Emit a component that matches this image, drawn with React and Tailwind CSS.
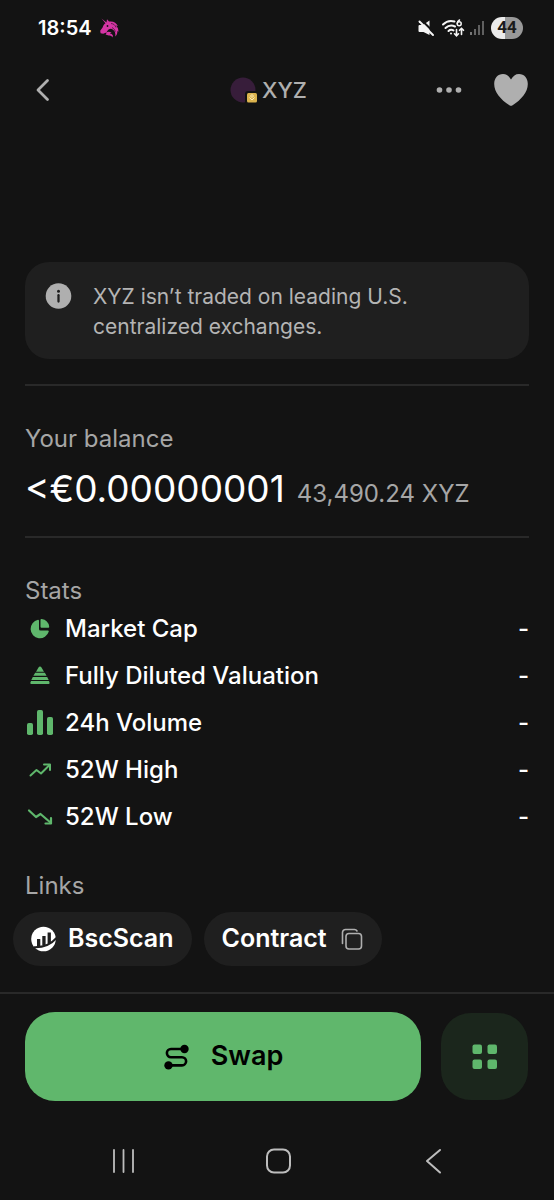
import React from "react";

const stats = [
  { label: "Market Cap", icon: PieIcon },
  { label: "Fully Diluted Valuation", icon: PyramidIcon },
  { label: "24h Volume", icon: BarsIcon },
  { label: "52W High", icon: TrendUpIcon },
  { label: "52W Low", icon: TrendDownIcon },
];

function PieIcon() {
  return (
    <svg width="28" height="28" viewBox="0 0 28 28" fill="#5fb76c" aria-hidden="true">
      <path d="M13 4.800a1 1 0 0 1 1 1V14a1.500 1.500 0 0 0 1.500 1.500h7.300a1 1 0 0 1 1 1.100A9.300 9.300 0 1 1 13 4.800z" />
      <path d="M15.500 5a1 1 0 0 1 1.200-1A9 9 0 0 1 24.200 11.500a1 1 0 0 1-1 1.200H16.500a1 1 0 0 1-1-1z" />
    </svg>
  );
}

function PyramidIcon() {
  return (
    <svg width="28" height="28" viewBox="0 0 28 28" fill="#5fb76c" aria-hidden="true">
      <path d="M13.500 5.500c.7-1.200 2.300-1.200 3 0L19 9.700h-8z" />
      <path d="M10.200 10.800h9.600l1.800 3H8.400z" />
      <path d="M7.800 14.900h14.400l1.500 3H6.300z" />
      <path d="M6 19h18l.5 1.500c.3.900-.2 1.500-1 1.500H6.500c-.9 0-1.400-.6-1.100-1.500z" />
    </svg>
  );
}

function BarsIcon() {
  return (
    <svg width="28" height="28" viewBox="0 0 28 28" fill="#5fb76c" aria-hidden="true">
      <rect x="2" y="14" width="6" height="12" rx="1.800" />
      <rect x="12" y="1" width="6" height="25" rx="1.800" />
      <rect x="22" y="8" width="6" height="18" rx="1.800" />
    </svg>
  );
}

function TrendUpIcon() {
  return (
    <svg width="28" height="28" viewBox="0 0 28 28" fill="none" stroke="#5fb76c" strokeWidth="2" strokeLinecap="round" strokeLinejoin="round" aria-hidden="true">
      <path d="M5.500 19.500l6-5.500 4.500 3.500L24.500 9" />
      <path d="M19 8.500h6V14" />
    </svg>
  );
}

function TrendDownIcon() {
  return (
    <svg width="28" height="28" viewBox="0 0 28 28" fill="none" stroke="#5fb76c" strokeWidth="2.200" strokeLinecap="round" strokeLinejoin="round" aria-hidden="true">
      <path d="M4 7.500l7 6.500 4.500-3L26 20" />
      <path d="M20.500 20.500H26V15" />
    </svg>
  );
}

function UnicornIcon() {
  return (
    <svg width="20" height="20" viewBox="0 0 20 20" fill="#d535a4" aria-hidden="true">
      <path d="M1.500.5L6.500 4.500 7 1.200 9 3.600c4-.8 7.600 1.200 8.800 4.400L16 7.500c1.800 1.800 2.700 4 2.300 6.500l-1-1.300c.3 2.200-.4 4.300-2 5.800.4-3.400-.3-5.400-2.600-7-1.900-1.300-2.400-.8-3.700-.2-1 .5-1.500 2-2.700 3.200L3.200 15.800l-2.600-.6-.4-2.400 2.400-3.200C3.200 7.600 4 6.200 5.500 5.200z" />
      <path d="M6 14.500c1.800-.9 3.700-.9 5.600.3-1 .2-1.500.5-1.700 1 1.400-.2 2.300.3 3 1.600l-.4 2c-.7-1.400-1.900-2-3.800-2l-3.200-.8c1-.8 1-1.400.5-2.100z" />
      <circle cx="7.500" cy="8" r=".9" fill="#131313" />
      <path d="M11 5.500c2.500.2 4.300 1.500 5 4M12 9.500c1.800.9 2.900 2.400 3.300 4.200" stroke="#131313" strokeWidth=".6" fill="none" />
    </svg>
  );
}

function StatusIcons() {
  return (
    <div className="flex items-center">
      <svg width="18" height="18" viewBox="0 0 18 18" aria-hidden="true">
        <path d="M2.500 6H6l6.500-4.500V16L6.500 13h-4a1 1 0 0 1-1-1V7a1 1 0 0 1 1-1z" fill="#f5f5f5" />
        <path d="M4.500 1L18 14.500" stroke="#131313" strokeWidth="2" />
        <path d="M2.500 2.500L16 16" stroke="#f5f5f5" strokeWidth="2" strokeLinecap="round" />
      </svg>
      <svg className="ml-1.5" width="24" height="20" viewBox="0 0 24 20" fill="none" stroke="#f5f5f5" strokeLinecap="round" aria-hidden="true">
        <path d="M2 6.500C5.500 3 9.500 2.300 13.500 3.500M4.500 10C7.300 7.400 11 6.900 14 8.500M7.500 13c1.400-1.300 3.300-1.500 5-.6" strokeWidth="2" />
        <circle cx="10" cy="15.500" r="1" fill="#f5f5f5" stroke="none" />
        <path d="M18.500 2c-1.500.9-2.200 2-2.200 3.500" strokeWidth="1.500" />
        <circle cx="18.200" cy="5.800" r="2" strokeWidth="1.500" />
        <path d="M15.500 11.500v6M13.500 15.800l2 2 2-2M20.500 16.500v-6M18.500 12.300l2-2 2 2" strokeWidth="1.600" />
      </svg>
      <svg className="ml-1" width="16" height="18" viewBox="0 0 16 18" aria-hidden="true">
        <rect x="1" y="13" width="2" height="3" fill="#777" />
        <rect x="5" y="10" width="2" height="6" fill="#666" />
        <rect x="9" y="6" width="2" height="10" fill="#606060" />
        <rect x="13" y="2" width="2" height="14" fill="#606060" />
      </svg>
      <span className="ml-1.5 flex h-[22px] w-8 items-center justify-center rounded-full bg-linear-to-r from-[#ebebeb] from-45% to-[#999999] to-45% font-['Roboto',sans-serif] text-[17px] font-bold text-[#1b1b1b]">
        44
      </span>
    </div>
  );
}

function StatusBar() {
  return (
    <div className="flex h-14 items-center justify-between pr-[31px] pl-[38px]">
      <div className="flex items-center gap-2">
        <span className="text-xl font-semibold">18:54</span>
        <UnicornIcon />
      </div>
      <StatusIcons />
    </div>
  );
}

function Header() {
  return (
    <header className="grid h-[68px] grid-cols-[1fr_auto_1fr] items-center pr-[25px] pl-8">
      <button aria-label="Back" className="w-6">
        <svg width="24" height="28" viewBox="0 0 24 28" fill="none" stroke="#afafaf" strokeWidth="2.800" strokeLinecap="round" strokeLinejoin="round">
          <path d="M15.500 4.500L6 14l9.500 9.500" />
        </svg>
      </button>
      <h1 className="flex items-center gap-1 pr-6 text-[22px] font-medium text-[#afafaf]">
        <svg width="28" height="28" viewBox="0 0 28 28" aria-hidden="true">
          <circle cx="13" cy="14" r="12.500" fill="#371d3a" />
          <rect x="15" y="15" width="14" height="14" rx="3" fill="#131313" />
          <rect x="17" y="17" width="10" height="9.500" rx="1.500" fill="#dcb44e" />
          <path d="M22 18.500l1.500 1.500-1.500 1.500-1.500-1.500zM19.500 21.500L22 24l2.500-2.500" fill="none" stroke="#fff3c8" strokeWidth=".9" />
        </svg>
        XYZ
      </h1>
      <div className="flex items-center justify-end gap-[30px]">
        <button aria-label="More options">
          <svg width="28" height="28" viewBox="0 0 28 28" fill="#afafaf">
            <circle cx="4.500" cy="14" r="2.800" />
            <circle cx="14" cy="14" r="2.800" />
            <circle cx="23.500" cy="14" r="2.800" />
          </svg>
        </button>
        <button aria-label="Favorite">
          <svg width="36" height="36" viewBox="0 0 36 36" fill="#afafaf">
            <path d="M18 7.500C20 4 22.500 2 26 2c5.200 0 8.800 4 8.800 10 0 8-6.300 15.500-15.200 21.300-1.200.7-2 .7-3.200 0C7.500 27.500 1.200 20 1.200 12 1.200 6 4.800 2 10 2c3.500 0 6 2 8 5.500z" />
          </svg>
        </button>
      </div>
    </header>
  );
}

function Notice() {
  return (
    <div className="flex gap-5 rounded-3xl bg-[#1f1f1f] px-5 pt-5 pb-[17px]">
      <svg className="shrink-0" width="28" height="28" viewBox="0 0 28 28" aria-hidden="true">
        <circle cx="13.500" cy="14" r="12.800" fill="#afafaf" />
        <circle cx="13.500" cy="9.300" r="1.500" fill="#1f1f1f" />
        <path d="M13.500 13.200v6.300" stroke="#1f1f1f" strokeWidth="2.300" strokeLinecap="round" />
      </svg>
      <p className="max-w-[380px] text-[21px] leading-[30px] text-[#b4b4b4]">
        XYZ isn’t traded on leading U.S. centralized exchanges.
      </p>
    </div>
  );
}

function Balance() {
  return (
    <section className="mt-[25px] border-y-2 border-[#292929] pt-[37px] pb-6">
      <h2 className="text-2xl leading-8 text-[#a6a6a6]">Your balance</h2>
      <p className="mt-[11px] flex items-baseline gap-3 whitespace-nowrap">
        <span className="text-[37px]/[46px]">&lt;€0.00000001</span>
        <span className="text-2xl text-[#a6a6a6]">43,490.24 XYZ</span>
      </p>
    </section>
  );
}

function Stats() {
  return (
    <section className="pt-[37px]">
      <h2 className="text-2xl leading-8 text-[#a6a6a6]">Stats</h2>
      <dl className="mt-1.5 flex flex-col gap-4">
        {stats.map(({ label, icon: Icon }) => (
          <div key={label} className="flex h-[31px] items-center justify-between text-2xl font-medium">
            <dt className="flex items-center gap-3">
              <Icon />
              {label}
            </dt>
            <dd>-</dd>
          </div>
        ))}
      </dl>
    </section>
  );
}

function Links() {
  return (
    <section className="mt-[38px]">
      <h2 className="px-[25px] text-2xl leading-8 text-[#a6a6a6]">Links</h2>
      <div className="mt-2.5 flex gap-3 px-[13px]">
        <a href="#bscscan" className="flex h-[54px] items-center gap-[11px] rounded-full bg-[#1f1f1f] px-[18px] text-[25px] font-semibold">
          <svg width="26" height="26" viewBox="0 0 26 26" aria-hidden="true">
            <circle cx="12.500" cy="13" r="12.300" fill="#fff" />
            <path d="M6 13h3.300v7H6zM11.300 10h3.300v9h-3.300zM16.600 6.500h3.300v11h-3.300z" fill="#1f1f1f" />
            <path d="M3 21.200c9 .3 17-2.700 22.500-9.200" fill="none" stroke="#1f1f1f" strokeWidth="2" />
          </svg>
          BscScan
        </a>
        <button className="flex h-[54px] items-center gap-[11px] rounded-full bg-[#1f1f1f] px-[18px] text-[25px] font-semibold">
          Contract
          <svg width="26" height="26" viewBox="0 0 26 26" fill="none" stroke="#afafaf" strokeWidth="1.600" strokeLinecap="round" aria-hidden="true">
            <rect x="8" y="7.500" width="15.500" height="15.500" rx="3" />
            <path d="M4.500 17.500V6.500a3 3 0 0 1 3-3H16a3 3 0 0 1 3 1.500" />
          </svg>
        </button>
      </div>
    </section>
  );
}

function ActionBar() {
  return (
    <div className="flex items-center gap-5 border-t-2 border-[#292929] pt-[18px] pr-[26px] pl-[25px]">
      <button className="flex h-[89px] flex-1 items-center justify-center gap-5 rounded-[30px] bg-[#60b76c] text-[27px] font-semibold text-black">
        <svg width="28" height="28" viewBox="0 0 28 28" fill="none" stroke="#000" strokeWidth="2.600" aria-hidden="true">
          <path d="M21 6H8a4.100 4.100 0 0 0 0 8.200H19a4.100 4.100 0 0 1 0 8.200H6" />
          <circle cx="21.500" cy="6" r="4.200" fill="#000" stroke="none" />
          <circle cx="5.500" cy="22.400" r="4.200" fill="#000" stroke="none" />
        </svg>
        Swap
      </button>
      <button aria-label="More actions" className="flex h-[87px] w-[87px] items-center justify-center rounded-[30px] bg-[#1b261c]">
        <svg width="28" height="28" viewBox="0 0 28 28" fill="#5fb76c">
          <rect x="1.500" y="1.500" width="9.500" height="9.500" rx="2" />
          <rect x="16.500" y="1.500" width="9.500" height="9.500" rx="2" />
          <rect x="1.500" y="16.500" width="9.500" height="9.500" rx="2" />
          <rect x="16.500" y="16.500" width="9.500" height="9.500" rx="2" />
        </svg>
      </button>
    </div>
  );
}

function SystemNav() {
  return (
    <nav className="mt-[45px] mb-6 flex justify-between px-[109px]">
      <button aria-label="Recent apps">
        <svg width="28" height="30" viewBox="0 0 28 30" fill="none" stroke="#bdbdbd" strokeWidth="1.800" strokeLinecap="round">
          <path d="M5 4v22M14.500 4v22M24 4v22" />
        </svg>
      </button>
      <button aria-label="Home">
        <svg width="28" height="30" viewBox="0 0 28 30" fill="none" stroke="#bdbdbd" strokeWidth="2">
          <rect x="4" y="3.500" width="23" height="23" rx="7" />
        </svg>
      </button>
      <button aria-label="Back to previous app">
        <svg width="28" height="30" viewBox="0 0 28 30" fill="none" stroke="#bdbdbd" strokeWidth="2" strokeLinecap="round" strokeLinejoin="round">
          <path d="M23 4L10 15l13 11.500" />
        </svg>
      </button>
    </nav>
  );
}

export default function App() {
  return (
    <div className="flex min-h-screen flex-col bg-[#131313] font-['Inter','Liberation_Sans',sans-serif] text-white">
      <StatusBar />
      <Header />
      <main className="pt-[138px] pb-6">
        <div className="px-[25px]">
          <Notice />
          <Balance />
          <Stats />
        </div>
        <Links />
      </main>
      <footer className="mt-auto">
        <ActionBar />
        <SystemNav />
      </footer>
    </div>
  );
}
